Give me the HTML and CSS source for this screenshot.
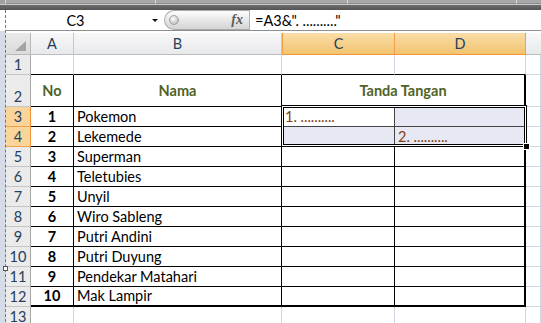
FILE: index.html
```html
<!DOCTYPE html>
<html lang="id">
<head>
    <meta charset="UTF-8">
    <meta name="viewport" content="width=device-width, initial-scale=1.0">
    <title>Tanda Tangan</title>
    <link rel="stylesheet" href="styles.css">
</head>
<body>
    <div class="ribbon-edge">
        <div class="groups">
            <span class="group g1"></span>
            <span class="group g2"></span>
            <span class="group g3"></span>
            <span class="group g4"></span>
        </div>
    </div>
    <div class="workspace">
        <div class="gutter"><span class="grip"></span></div>
        <div class="pane">
            <div class="formula-bar">
                <div class="name-box"><span class="ref">C3</span><span class="drop"></span></div>
                <div class="fx-box"><span class="knob"></span><span class="fx">fx</span></div>
                <div class="formula">=A3&amp;". .........."</div>
            </div>

            <div class="sheet">
                <!-- column headers -->
                <div class="cell corner"></div>
                <div class="cell hd">A</div>
                <div class="cell hd">B</div>
                <div class="cell hd sel">C</div>
                <div class="cell hd sel">D</div>
                <div class="cell hd last"></div>

                <!-- row 1 -->
                <div class="cell rh">1</div>
                <div class="cell tb"></div>
                <div class="cell tb"></div>
                <div class="cell tb"></div>
                <div class="cell tb"></div>
                <div class="cell"></div>

                <!-- row 2 -->
                <div class="cell rh">2</div>
                <div class="cell t head">No</div>
                <div class="cell t head">Nama</div>
                <div class="cell t head wide r2">Tanda Tangan</div>
                <div class="cell"></div>

                <!-- row 3 -->
                <div class="cell rh sel">3</div>
                <div class="cell t num">1</div>
                <div class="cell t">Pokemon</div>
                <div class="cell t dots in-r in-b">1. ..........</div>
                <div class="cell t tint r2 in-b"></div>
                <div class="cell"></div>

                <!-- row 4 -->
                <div class="cell rh sel">4</div>
                <div class="cell t num">2</div>
                <div class="cell t">Lekemede</div>
                <div class="cell t tint in-r"></div>
                <div class="cell t tint dots r2">2. ..........</div>
                <div class="cell"></div>

                <div class="cell rh">5</div>
                <div class="cell t num">3</div>
                <div class="cell t">Superman</div>
                <div class="cell t"></div>
                <div class="cell t r2"></div>
                <div class="cell"></div>

                <div class="cell rh">6</div>
                <div class="cell t num">4</div>
                <div class="cell t">Teletubies</div>
                <div class="cell t"></div>
                <div class="cell t r2"></div>
                <div class="cell"></div>

                <div class="cell rh">7</div>
                <div class="cell t num">5</div>
                <div class="cell t">Unyil</div>
                <div class="cell t"></div>
                <div class="cell t r2"></div>
                <div class="cell"></div>

                <div class="cell rh">8</div>
                <div class="cell t num">6</div>
                <div class="cell t">Wiro Sableng</div>
                <div class="cell t"></div>
                <div class="cell t r2"></div>
                <div class="cell"></div>

                <div class="cell rh">9</div>
                <div class="cell t num">7</div>
                <div class="cell t">Putri Andini</div>
                <div class="cell t"></div>
                <div class="cell t r2"></div>
                <div class="cell"></div>

                <div class="cell rh">10</div>
                <div class="cell t num">8</div>
                <div class="cell t">Putri Duyung</div>
                <div class="cell t"></div>
                <div class="cell t r2"></div>
                <div class="cell"></div>

                <div class="cell rh">11</div>
                <div class="cell t num">9</div>
                <div class="cell t">Pendekar Matahari</div>
                <div class="cell t"></div>
                <div class="cell t r2"></div>
                <div class="cell"></div>

                <div class="cell rh">12</div>
                <div class="cell t num b2">10</div>
                <div class="cell t b2">Mak Lampir</div>
                <div class="cell t b2"></div>
                <div class="cell t r2 b2"></div>
                <div class="cell"></div>

                <div class="cell rh">13</div>
                <div class="cell"></div>
                <div class="cell"></div>
                <div class="cell"></div>
                <div class="cell"></div>
                <div class="cell"></div>

                <!-- selected range C3:D4 -->
                <div class="selection"><span class="fill-handle"></span></div>
            </div>
        </div>
    </div>
</body>
</html>
```

FILE: styles.css
```css
* {
    box-sizing: border-box;
}

body {
    margin: 0;
    width: 541px;
    height: 323px;
    overflow: hidden;
    background: #fff;
    font-family: Lato, "Liberation Sans", sans-serif;
    font-size: 14.5px;
    color: #000;
}

/* bottom edge of the ribbon */
.ribbon-edge {
    height: 10px;
    background: linear-gradient(#9e9e9e 0, #a3a3a3 4px, #cacaca 4px, #cacaca 5px, #6c6c6c 5px, #555 10px);
}

.groups {
    height: 4px;
    display: flex;
    padding-left: 5px;
}

.group {
    height: 4px;
    background: #a8a8a8;
    border-left: 1px solid #d8d8d8;
    border-bottom: 1px solid #8c8c8c;
}

.g1 {
    width: 150px;
}

.g2 {
    width: 192px;
}

.g3 {
    width: 169px;
}

.g4 {
    flex: 1;
}

.workspace {
    display: flex;
}

.gutter {
    width: 6px;
    flex: none;
    position: relative;
    background: linear-gradient(#fff 0, #fff 21px, #d5dce8 21px);
    border-right: 1px dashed #3f7fd6;
}

.grip {
    position: absolute;
    z-index: 3;
    left: 3px;
    top: 256px;
    width: 5px;
    height: 5px;
    border: 1px solid #555;
    background: #fff;
}

.pane {
    flex: 1;
    min-width: 0;
}

/* formula bar */
.formula-bar {
    height: 21px;
    display: flex;
    border-bottom: 1px solid #8f8f8f;
}

.name-box {
    width: 158px;
    display: flex;
    align-items: center;
}

.ref {
    flex: 1;
    text-align: center;
}

.drop {
    width: 19px;
    display: flex;
    justify-content: center;
}

.drop::after {
    content: "";
    border-left: 3px solid transparent;
    border-right: 3px solid transparent;
    border-top: 3px solid #111;
}

.fx-box {
    width: 85px;
    display: flex;
    align-items: center;
    padding-left: 4px;
    border: 1px solid #a9a9a9;
    border-right: none;
    border-radius: 10px 0 0 10px;
    background: linear-gradient(#fdfdfd, #e4e4e4 60%, #d5d5d5);
}

.knob {
    width: 10px;
    height: 10px;
    border-radius: 50%;
    border: 1px solid #a3a3a3;
    background: radial-gradient(circle at 40% 35%, #fff, #c4c4c4 70%, #9c9c9c);
}

.fx {
    margin-left: auto;
    margin-right: 6px;
    font: italic bold 14px "Liberation Serif", serif;
    color: #5c5c5c;
}

.formula {
    flex: 1;
    display: flex;
    align-items: center;
    padding-left: 5px;
    border-left: 1px solid #b3b3b3;
    white-space: nowrap;
}

/* worksheet grid */
.sheet {
    position: relative;
    margin-top: 2px;
    display: grid;
    grid-template-columns: 25px 43px 208px 113px 131px 1fr;
    grid-template-rows: 22px 20px 32px repeat(11, 20px);
}

.cell {
    display: flex;
    align-items: flex-end;
    padding: 0 3px 1px;
    line-height: 17px;
    white-space: nowrap;
    overflow: hidden;
    border-right: 1px solid #d0d7e5;
    border-bottom: 1px solid #d0d7e5;
}

.corner {
    position: relative;
    background: linear-gradient(#e9e9e9, #dcdcdc);
    border-right: 1px solid #b9b9b9;
    border-bottom: 1px solid #b9b9b9;
}

.corner::after {
    content: "";
    position: absolute;
    right: 4px;
    bottom: 3px;
    border-left: 11px solid transparent;
    border-bottom: 10px solid #a3a3a3;
}

.hd {
    justify-content: center;
    align-items: center;
    padding: 0;
    color: #26405c;
    background: linear-gradient(#f8f8f9, #e8e9eb);
    border-right: 1px solid #c6c9ce;
    border-bottom: 1px solid #b9bcc1;
}

.hd.sel {
    background: linear-gradient(#f9dda9, #f2c46f);
    border-right: 1px solid #f1a045;
    border-bottom: 1px solid #f29436;
}

.hd.sel:nth-child(4) {
    border-left: 1px solid #f1a045;
}

.hd.last {
    border-right: none;
}

.rh {
    justify-content: center;
    padding: 0 0 1px;
    color: #26405c;
    background: #ebebeb;
    border-right: 1px solid #a7a7a7;
    border-bottom: 1px solid #c5c5c5;
}

.rh.sel {
    background: #f9d59c;
    border-right: 1px solid #f29436;
    border-bottom: 1px solid #f1a045;
}

/* table borders */
.tb {
    border-bottom-color: #000;
}

.t {
    border-right-color: #000;
    border-bottom-color: #000;
}

.r2 {
    border-right: 2px solid #000;
}

.b2 {
    border-bottom: 2px solid #000;
}

.head {
    justify-content: center;
    align-items: center;
    padding: 0;
    font-weight: bold;
    color: #4f6228;
}

.wide {
    grid-column: span 2;
}

.num {
    justify-content: center;
    font-weight: bold;
}

.dots {
    color: #843c0c;
}

.tint {
    background: #e6e9f3;
}

.in-r {
    border-right-color: #444;
}

.in-b {
    border-bottom-color: #444;
}

.selection {
    position: absolute;
    left: 275px;
    top: 72px;
    width: 246px;
    height: 42px;
    border: 1px solid #000;
    box-shadow: inset 0 0 0 1px #fff, inset 0 0 0 2px #000;
    pointer-events: none;
}

.fill-handle {
    position: absolute;
    right: -4px;
    bottom: -4px;
    width: 7px;
    height: 7px;
    background: #000;
    border: 1px solid #fff;
}
```
